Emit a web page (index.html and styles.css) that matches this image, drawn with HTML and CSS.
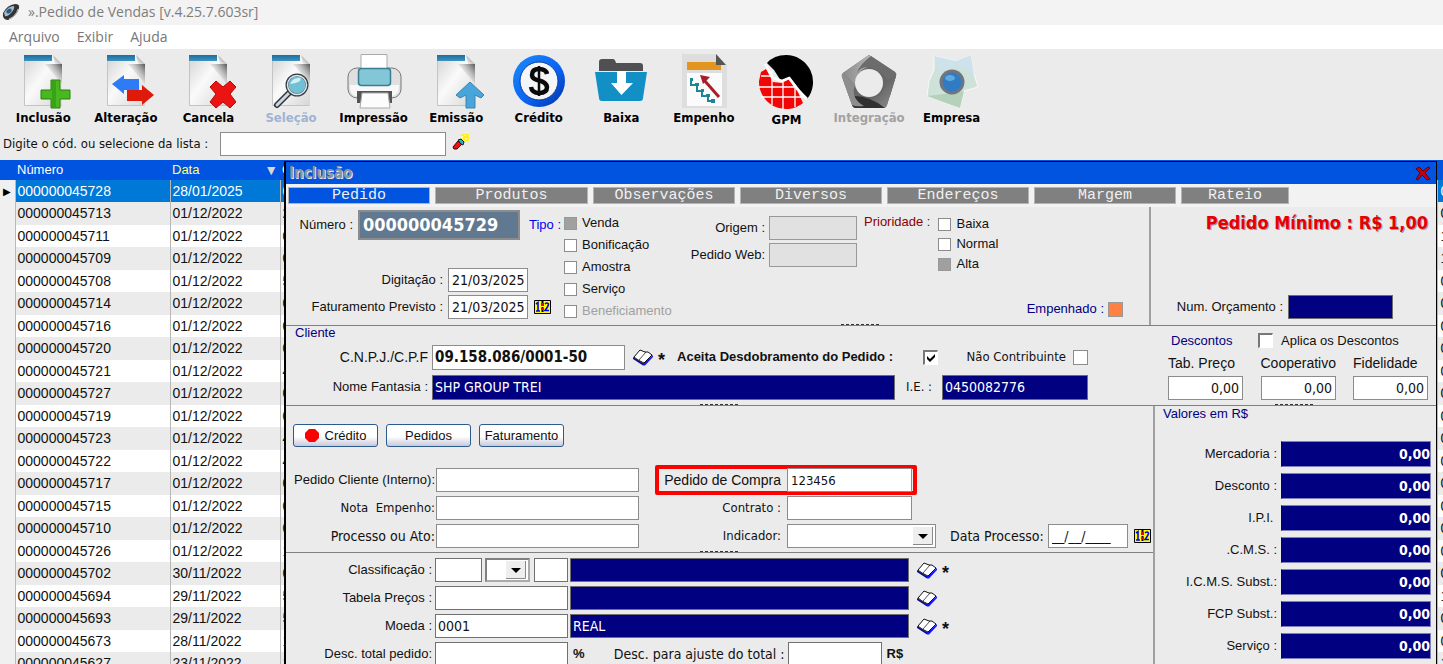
FILE: index.html
```html
<!DOCTYPE html>
<html lang="pt-BR">
<head>
<meta charset="utf-8">
<title>Pedido de Vendas</title>
<link rel="stylesheet" href="styles.css">
</head>
<body>
<svg class="defs" aria-hidden="true">
  <defs>
    <linearGradient id="paper" x1="0" y1="0" x2="1" y2="1"><stop offset="0" stop-color="#d2d2d2"/><stop offset=".45" stop-color="#fafafa"/><stop offset="1" stop-color="#d6d6d6"/></linearGradient>
    <linearGradient id="band" x1="0" y1="0" x2="0" y2="1"><stop offset="0" stop-color="#1b6ea0"/><stop offset="1" stop-color="#3d93bd"/></linearGradient>
    <linearGradient id="fold" x1="0" y1="1" x2="1" y2="0"><stop offset="0" stop-color="#fff"/><stop offset="1" stop-color="#777"/></linearGradient>
    <linearGradient id="shade" x1="0" y1="1" x2="1" y2="0"><stop offset=".4" stop-color="#888" stop-opacity="0"/><stop offset="1" stop-color="#444" stop-opacity=".9"/></linearGradient>
    <linearGradient id="ring" x1="0" y1="0" x2="1" y2="1"><stop offset="0" stop-color="#1a8cff"/><stop offset=".6" stop-color="#0a60f0"/><stop offset="1" stop-color="#0030a0"/></linearGradient>
    <linearGradient id="gl" x1="0" y1="0" x2="1" y2="0"><stop offset="0" stop-color="#8a8a8a"/><stop offset="1" stop-color="#c8c8c8"/></linearGradient>
    <linearGradient id="gd" x1="0" y1="0" x2="1" y2="1"><stop offset="0" stop-color="#444"/><stop offset="1" stop-color="#909090"/></linearGradient>
    <symbol id="doc" viewBox="0 0 56 56">
      <path d="M9 1h29l9 9v42H9z" fill="url(#paper)"/>
      <path d="M30 10h17v20z" fill="url(#shade)"/>
      <path d="M9 1h28v6H9z" fill="url(#band)"/>
      <path d="M38 1l9 9h-7z" fill="url(#fold)"/>
      <path d="M9.500 7v44.500h37" fill="none" stroke="#c4c4c4"/>
    </symbol>
    <symbol id="book" viewBox="0 0 20 17">
      <path d="M0 8v2l10 6.500h2L20 8V6l-8 7-2 1z" fill="#1414ff"/>
      <path d="M1 8L7 1l5 2h3l4 3-8 8-4-2-2-1z" fill="#fff"/>
      <path d="M1 8L7 1l5 2h3l4 3-8 8-4-2-2-1z" fill="none" stroke="#111"/>
      <path d="M13 3L6 11" stroke="#222" fill="none" stroke-width=".8"/>
      <path d="M0 9l10 6.500" stroke="#111" fill="none" stroke-width=".8"/>
    </symbol>
    <symbol id="cal" viewBox="0 0 17 14">
      <path d="M.5.5h16v13H.5z" fill="#ff0" stroke="#000"/>
      <path d="M2 4l2-1.500V11M2 11h4M11 4q2-2 3.500 0 0 2-3.500 6.500h4" fill="none" stroke="#00f" stroke-width="1.600"/>
      <path d="M8.500 1v12" stroke="#000" stroke-width="2" stroke-dasharray="2 1"/>
      <path d="M7 3h3v3H7zM7 8h3v2H7z" fill="#e00"/>
    </symbol>
  </defs>
</svg>

<header class="titlebar">
  <svg class="app-icon" viewBox="0 0 18 18"><path d="M1 10Q5 2 13 1q5 0 4 4-2 8-11 12Q0 17 1 10z" fill="#333"/><path d="M2 10Q6 3 12 3q1 3-3 7-4 4-6 3z" fill="#a9b9c8"/><ellipse cx="7" cy="8" rx="3" ry="2" fill="#1f5f8f" transform="rotate(-35 7 8)"/><path d="M16 6q-2 7-9 10" stroke="#bbb" fill="none"/></svg>
  <h1>».Pedido de Vendas [v.4.25.7.603sr]</h1>
</header>
<nav class="menubar">
  <a href="#">Arquivo</a><a href="#">Exibir</a><a href="#">Ajuda</a>
</nav>

<div class="toolbar">
  <button type="button"><svg viewBox="0 0 56 56"><use href="#doc"/><path d="M36 26h9v10h10v9H45v9h-9v-9H26v-9h10z" fill="#49b81f" stroke="#2c7f10"/><path d="M37 27h4v26h-4z" fill="#278e0c" opacity=".5"/></svg>Inclusão</button>
  <button type="button"><svg viewBox="0 0 56 56"><use href="#doc"/><path d="M14 30l12-9v4h15v11H26v4z" fill="#2d7cf5"/><path d="M56 41L44 31v5H29v11h15v4z" fill="#e01a0b"/></svg>Alteração</button>
  <button type="button"><svg viewBox="0 0 56 56"><use href="#doc"/><path d="M30 33l6-6 7 6 7-6 6 6-6 7 6 8-6 6-7-6-7 6-6-6 6-8z" fill="#ec1313" stroke="#b40a0a"/></svg>Cancela</button>
  <button type="button" class="off"><svg viewBox="0 0 56 56"><use href="#doc"/><path d="M27 38L14 51" stroke="#2b3440" stroke-width="6" stroke-linecap="round"/><path d="M26 39L14 51" stroke="#cfd6de" stroke-width="3" stroke-linecap="round"/><circle cx="34" cy="31" r="10" fill="#70c0d6" stroke="#333d47" stroke-width="3"/><circle cx="34" cy="31" r="9.500" fill="none" stroke="#dfe6ea" stroke-width="1.500"/><path d="M27 30q3-7 10-6 3 4-10 6z" fill="#d2f1f7"/></svg>Seleção</button>
  <button type="button"><svg viewBox="0 0 56 56"><rect x="2" y="14" width="53" height="30" rx="9" fill="#e0e0e0" stroke="#777"/><path d="M15 .5h26V16H15z" fill="#fff" stroke="#aaa"/><path d="M4 31h49q0 11-7 11H10q-6 0-6-11z" fill="#f8f8f8"/><rect x="12.500" y="14.500" width="32" height="17" rx="3" fill="#83c6d6" stroke="#397d92" stroke-width="1.500"/><path d="M11 37h35v12h-5v-7H16v7h-5z" fill="#555"/><path d="M16 39h26l2 15H14z" fill="#fcfcfc" stroke="#aaa"/></svg>Impressão</button>
  <button type="button"><svg viewBox="0 0 56 56"><use href="#doc"/><path d="M42 28l14 13-3 3-6-3v13h-9V41l-6 3-4-3z" fill="#48a5da" stroke="#3d83ab"/></svg>Emissão</button>
  <button type="button"><svg viewBox="0 0 56 56"><circle cx="28" cy="27" r="26" fill="url(#ring)"/><circle cx="28" cy="27" r="19" fill="#f4f5f8" stroke="#0a3d9c"/><path d="M36 20q-1-5-8-5-7 0-7 6 0 4 7 5.500t8 6.500q0 6-8 6-7 0-8-6" fill="none" stroke="#0a0a0a" stroke-width="4.500"/><path d="M28 12v30" stroke="#0a0a0a" stroke-width="2.500"/></svg>Crédito</button>
  <button type="button"><svg viewBox="0 0 56 56"><path d="M6 17V8q0-3 3-3h11q2 0 3 4h24q3 0 3 3v5z" fill="#505054"/><path d="M2 18h52l-4 26q0 3-3 3H9q-3 0-3-3z" fill="#1290c6"/><path d="M24 17h9v12h7L28.500 41 18 29h6z" fill="#fff"/></svg>Baixa</button>
  <button type="button"><svg viewBox="0 0 56 56"><path d="M6 0h34l11 11v43H6z" fill="#dedede"/><path d="M11 19h35v33H11z" fill="#fbfbfb"/><path d="M11 8h34v8H11z" fill="#e4951f"/><path d="M40 0l10 11H40z" fill="#555"/><path d="M15 26v5h6v6h5v5h6v5h6" fill="none" stroke="#1e8597" stroke-width="2"/><path d="M14 24h3v3h-3zM19 29h4v3h-4zM25 35h3v3h-3zM30 40h4v3h-4zM35 45h4v4h-4z" fill="#1e8597"/><path d="M43 43L28 26" stroke="#a81d2a" stroke-width="3"/><path d="M24 21l10 2-7 7z" fill="#a81d2a"/></svg>Empenho</button>
  <button type="button" class="low"><svg viewBox="0 0 56 56"><path d="M9 9Q16 1 28 1a27 27 0 0 1 21 44L39 32l-7-9-9 4-7-11z" fill="#000"/><path d="M3 18l5-3 7 13 9 1 7-4 8 11 6 13A27 27 0 0 1 1 27z" fill="#f20505"/><path d="M3 22h11M1 33h38M3 43h44M14 16v35M25 28v27M37 34v19" stroke="#fff" stroke-width="1.300"/><path d="M7 10l8 14 9 3 7-3 8 11 10 10" fill="none" stroke="#fff" stroke-width="2.500"/></svg>GPM</button>
  <button type="button" class="off gray"><svg viewBox="0 0 56 56"><path d="M28 1l26 17q2 2 1 4L46 51q-1 3-4 3H15q-3 0-4-3L1 23q-1-2 1-4z" fill="#666"/><path d="M26 2q2-1 4 0l12 9Q15 10 14 31L2 19z" fill="url(#gl)"/><path d="M30 2l24 16q2 2 1 4l-6 20q2-23-21-29-8-1-12 6 3-9 14-17z" fill="#6c6c6c"/><path d="M55 22l-9 29q-1 3-4 3-4-8-20-10 17 3 22-12 3-8 11-10z" fill="url(#gd)"/><path d="M44 54H15q-3 0-4-3l3-9q14 0 30 12z" fill="#303030"/><path d="M2 19q-2 2-1 4l10 28q3 2 12 1-14-8-9-21z" fill="#8d8d8d"/><circle cx="28" cy="29" r="14" fill="#ebebeb"/></svg>Integração</button>
  <button type="button"><svg viewBox="0 0 56 56"><path d="M10 2l22 5 15-6 3 19 4 13-14 4-4 17-17-6-16-6 2-15 5-11z" fill="#cfe2da" stroke="#f8faf8"/><path d="M10 2l22 5 15-6 3 19-17-8-18 6z" fill="#cde2ea"/><path d="M3 42l16 6 17 6 4-17-20 3z" fill="#b5d0bb"/><circle cx="28" cy="28" r="12.500" fill="#70747f"/><circle cx="28" cy="28" r="9.500" fill="#2f7cc4"/><ellipse cx="26" cy="24" rx="5" ry="3" fill="#60a8e0"/></svg>Empresa</button>
</div>

<div class="search">
  <label for="q">Digite o cód. ou selecione da lista :</label>
  <input id="q" type="text">
  <svg class="torch" viewBox="0 0 18 16"><path d="M8 1l3-1h6v7l-5 1z" fill="#ffef28"/><path d="M9 2h2v2H9zM13 4h2v2h-2zM12 1h2v1h-2z" fill="#fff9a0"/><path d="M1 13l5-6 4 3-5 5H2z" fill="#e11" stroke="#300"/><path d="M6 6l3-1 3 3-1 3-2-1z" fill="#20b8b0" stroke="#023"/></svg>
</div>

<main class="workspace">
  <table class="orders">
    <colgroup><col class="c-mark"><col class="c-num"><col class="c-date"><col><col class="c-last"></colgroup>
    <thead><tr><th></th><th>Número</th><th class="sorted">Data<span>▼</span></th><th>C</th><th></th></tr></thead>
    <tbody>
      <tr class="current"><td>▶</td><td>000000045728</td><td>28/01/2025</td><td>0</td><td>0</td></tr>
      <tr><td></td><td>000000045713</td><td>01/12/2022</td><td>2</td><td>0</td></tr>
      <tr><td></td><td>000000045711</td><td>01/12/2022</td><td>0</td><td>1</td></tr>
      <tr><td></td><td>000000045709</td><td>01/12/2022</td><td>0</td><td>1</td></tr>
      <tr><td></td><td>000000045708</td><td>01/12/2022</td><td>5</td><td>0</td></tr>
      <tr><td></td><td>000000045714</td><td>01/12/2022</td><td>0</td><td>0</td></tr>
      <tr><td></td><td>000000045716</td><td>01/12/2022</td><td>0</td><td>0</td></tr>
      <tr><td></td><td>000000045720</td><td>01/12/2022</td><td>0</td><td>0</td></tr>
      <tr><td></td><td>000000045721</td><td>01/12/2022</td><td>4</td><td>0</td></tr>
      <tr><td></td><td>000000045727</td><td>01/12/2022</td><td>0</td><td>0</td></tr>
      <tr><td></td><td>000000045719</td><td>01/12/2022</td><td>0</td><td>0</td></tr>
      <tr><td></td><td>000000045723</td><td>01/12/2022</td><td>4</td><td>0</td></tr>
      <tr><td></td><td>000000045722</td><td>01/12/2022</td><td>4</td><td>0</td></tr>
      <tr><td></td><td>000000045717</td><td>01/12/2022</td><td>0</td><td>0</td></tr>
      <tr><td></td><td>000000045715</td><td>01/12/2022</td><td>0</td><td>0</td></tr>
      <tr><td></td><td>000000045710</td><td>01/12/2022</td><td>0</td><td>0</td></tr>
      <tr><td></td><td>000000045726</td><td>01/12/2022</td><td>1</td><td>0</td></tr>
      <tr><td></td><td>000000045702</td><td>30/11/2022</td><td>0</td><td>0</td></tr>
      <tr><td></td><td>000000045694</td><td>29/11/2022</td><td>5</td><td>1</td></tr>
      <tr><td></td><td>000000045693</td><td>29/11/2022</td><td>5</td><td>0</td></tr>
      <tr><td></td><td>000000045673</td><td>28/11/2022</td><td>1</td><td>0</td></tr>
      <tr><td></td><td>000000045627</td><td>23/11/2022</td><td>1</td><td>1</td></tr>
    </tbody>
  </table>

  <section class="dialog">
    <div class="dialog-title"><h2>Inclusão</h2>
      <button type="button" aria-label="Fechar"><svg viewBox="0 0 16 15"><path d="M1 3l3-2 4 4 5-4 2 1-5 5 5 6-3 1-5-5-4 5-2-1 4-6z" fill="#c00010" stroke="#600010"/></svg></button>
    </div>
    <div class="tabs">
      <button type="button" class="active">Pedido</button><button type="button" class="wide">Produtos</button><button type="button">Observações</button><button type="button">Diversos</button><button type="button">Endereços</button><button type="button">Margem</button><button type="button" class="short">Rateio</button>
    </div>

    <div class="order-head">
      <div class="ident">
        <div class="row first"><label for="num">Número :</label><input id="num" class="number" value="000000045729"><span class="blue">Tipo :</span></div>
        <div class="row"><label for="dig">Digitação :</label><input id="dig" class="date" value="21/03/2025"></div>
        <div class="row"><label for="fat">Faturamento Previsto :</label><input id="fat" class="date" value="21/03/2025"><svg class="cal"><use href="#cal"/></svg></div>
      </div>
      <div class="checks types">
        <label><input type="checkbox" class="filled">Venda</label>
        <label><input type="checkbox">Bonificação</label>
        <label><input type="checkbox">Amostra</label>
        <label><input type="checkbox">Serviço</label>
        <label class="dim"><input type="checkbox" disabled>Beneficiamento</label>
      </div>
      <div class="origin">
        <label for="ori">Origem :</label><input id="ori" disabled>
        <label for="web">Pedido Web:</label><input id="web" disabled>
      </div>
      <div class="priority">
        <div class="prio-top"><span class="maroon">Prioridade :</span>
          <div class="checks">
            <label><input type="checkbox">Baixa</label>
            <label><input type="checkbox">Normal</label>
            <label><input type="checkbox" class="filled">Alta</label>
          </div>
        </div>
        <div class="reserved">Empenhado :<i></i></div>
      </div>
      <div class="budget">
        <strong>Pedido Mínimo : R$ 1,00</strong>
        <div class="row"><label for="orc">Num. Orçamento :</label><input id="orc" class="navy"></div>
      </div>
    </div>

    <div class="client">
      <div class="client-main">
        <h3>Cliente</h3>
        <div class="row">
          <label class="lbl large" for="cnpj">C.N.P.J./C.P.F</label><input id="cnpj" class="cnpj" value="09.158.086/0001-50">
          <svg class="book"><use href="#book"/></svg><b class="star">*</b>
          <label class="accept" for="desd">Aceita Desdobramento do Pedido :</label><input id="desd" type="checkbox" class="sunken" checked>
          <label class="tah nocontrib" for="nc">Não Contribuinte</label><input id="nc" type="checkbox" class="big">
        </div>
        <div class="row">
          <label class="lbl" for="nome">Nome Fantasia :</label><input id="nome" class="navy name" value="SHP GROUP TREI">
          <label class="tah" for="ie">I.E. :</label><input id="ie" class="navy ie" value="0450082776">
        </div>
      </div>
      <div class="discounts">
        <div class="disc-head"><h3>Descontos</h3><label><input type="checkbox" class="sunken">Aplica os Descontos</label></div>
        <div class="disc-grid">
          <label>Tab. Preço<input value="0,00"></label>
          <label>Cooperativo<input value="0,00"></label>
          <label>Fidelidade<input value="0,00"></label>
        </div>
      </div>
    </div>

    <div class="lower">
      <div class="lower-main">
        <div class="purchase">
          <div class="actions"><button type="button"><svg viewBox="0 0 14 13"><path d="M4 0h6l4 4v5l-4 4H4L0 9V4z" fill="#f00"/></svg>Crédito</button><button type="button">Pedidos</button><button type="button">Faturamento</button></div>
          <div class="row"><label class="lbl" for="pci">Pedido Cliente (Interno):</label><input id="pci" class="f-long">
            <div class="highlight"><label class="lbl2 large" for="pc">Pedido de Compra</label><input id="pc" class="f-mid" value="123456"></div></div>
          <div class="row"><label class="lbl tah" for="ne">Nota&nbsp; Empenho:</label><input id="ne" class="f-long"><label class="lbl2 tah" for="ct">Contrato :</label><input id="ct" class="f-mid"></div>
          <div class="row"><label class="lbl tah large" for="pa">Processo ou Ato:</label><input id="pa" class="f-long"><label class="lbl2 tah" for="ind">Indicador:</label><select id="ind" class="combo"><option></option></select>
            <label class="tah large proc" for="dp">Data Processo:</label><input id="dp" class="date" value="__/__/____"><svg class="cal"><use href="#cal"/></svg></div>
        </div>
        <div class="terms">
          <div class="row"><label class="lbl" for="cl">Classificação :</label><input id="cl" class="f-a"><select aria-label="Classe" class="combo mini"><option></option></select><input aria-label="Subclasse" class="f-b"><input aria-label="Descrição da classificação" class="navy desc"><svg class="book"><use href="#book"/></svg><b class="star">*</b></div>
          <div class="row"><label class="lbl" for="tp">Tabela Preços :</label><input id="tp" class="f-code"><input aria-label="Descrição da tabela" class="navy desc"><svg class="book"><use href="#book"/></svg></div>
          <div class="row"><label class="lbl" for="mo">Moeda :</label><input id="mo" class="f-code" value="0001"><input aria-label="Descrição da moeda" class="navy desc" value="REAL"><svg class="book"><use href="#book"/></svg><b class="star">*</b></div>
          <div class="row"><label class="lbl" for="dt">Desc. total pedido:</label><input id="dt" class="f-code"><b class="unit">%</b><label class="tah large adjust" for="da">Desc. para ajuste do total :</label><input id="da" class="f-adj"><b class="unit">R$</b></div>
        </div>
      </div>
      <div class="totals">
        <h3>Valores em R$</h3>
        <div class="totals-grid">
          <label for="v1">Mercadoria :</label><input id="v1" value="0,00">
          <label for="v2">Desconto :</label><input id="v2" value="0,00">
          <label for="v3">I.P.I.&nbsp;</label><input id="v3" value="0,00">
          <label for="v4">.C.M.S. :</label><input id="v4" value="0,00">
          <label for="v5">I.C.M.S. Subst.:</label><input id="v5" value="0,00">
          <label for="v6">FCP Subst.:</label><input id="v6" value="0,00">
          <label for="v7">Serviço :</label><input id="v7" value="0,00">
        </div>
      </div>
    </div>
  </section>
</main>
</body>
</html>
```
FILE: styles.css
```css
:root {
  --tahoma: "DejaVu Sans Condensed", "DejaVu Sans", sans-serif;
  --arial: "Liberation Sans", Arial, sans-serif;
  --blue: #0054e0;
  --navy: #000080;
  --face: #ebebeb;
}
* { box-sizing: border-box; }
body {
  margin: 0;
  height: 100vh;
  display: flex;
  flex-direction: column;
  overflow: hidden;
  background: var(--face);
  font: 13px/16px var(--arial);
  color: #111;
}
h1, h2, h3 { margin: 0; font-weight: normal; }
button, input, select { font: inherit; color: inherit; margin: 0; border-radius: 0; }
svg { display: block; flex: none; }
.defs { position: absolute; width: 0; height: 0; }

/* window chrome */
.titlebar { display: flex; align-items: center; gap: 8px; height: 25px; padding: 0 2px 2px; background: #f3f3f3; color: #7d7d7d; flex: none; }
.app-icon { width: 18px; height: 18px; }
.titlebar h1 { font: 14px/20px "Open Sans", sans-serif; }
.menubar { display: flex; align-items: center; gap: 17px; height: 24px; padding: 0 9px; background: #fff; flex: none; }
.menubar a { font: 14px/20px "Open Sans", sans-serif; color: #777; text-decoration: none; }
.toolbar { display: flex; width: 100%; max-width: 993px; height: 82px; padding: 5px 0 0 2px; flex: none; }
.toolbar button { flex: 1 1 0; min-width: 0; display: flex; flex-direction: column; align-items: center; padding: 0; border: 0; background: none; font: bold 13px/16px var(--tahoma); color: #000; white-space: nowrap; }
.toolbar svg { width: 56px; height: 56px; }
.toolbar .low { line-height: 20px; }
.toolbar .off { color: #9fb4d2; }
.toolbar .gray { color: #a2a2a2; }
.search { display: flex; align-items: flex-start; height: 29px; padding: 1px 3px; flex: none; }
.search label { flex: none; width: 217px; font: 13px/24px var(--tahoma); white-space: nowrap; }
.search input { width: 226px; height: 24px; border: 1px solid #8c8c8c; background: #fff; }
.torch { width: 18px; height: 16px; margin: 2px 0 0 6px; }

/* list behind the form */
.workspace { position: relative; flex: 1; min-height: 0; overflow: hidden; }
.orders { width: 100%; border-collapse: collapse; table-layout: fixed; background: #fff; }
.c-mark { width: 15px; }
.c-num { width: 155px; }
.c-date { width: 110px; }
.c-last { width: 6px; }
.orders th { height: 20px; padding: 0 2px; background: var(--blue); color: #fff; font: 13px/20px var(--arial); text-align: left; overflow: hidden; }
.orders .sorted { color: #ffff80; }
.sorted span { float: right; font-size: 14px; color: #d8d8d8; }
.orders td { height: 22px; padding: 0 2px; font-size: 14px; line-height: 21px; border-right: 1px solid #b8b8b8; overflow: hidden; white-space: nowrap; }
.orders tr:nth-child(even) td { height: 23px; }
.orders tr td:first-child { background: #f0f0f0; font-size: 10px; padding: 0 3px; color: #000; }
.orders tbody tr:nth-child(odd) td:not(:first-child) { background: #fff; }
.orders tbody tr:nth-child(even) td:not(:first-child) { background: #ebebeb; }
.orders tbody tr.current td:not(:first-child) { background: #0078d7; color: #fff; }
.orders td:last-child { padding: 0 0 0 3px; border: 0; }

/* form window */
.dialog { position: absolute; left: 284px; right: 6px; top: 1px; bottom: 0; overflow: hidden; display: flex; flex-direction: column; border: solid #000; border-width: 1px 1px 0 2px; background: var(--face); }
.dialog-title { display: flex; justify-content: space-between; align-items: center; height: 22px; padding: 0 5px 0 3px; background: var(--blue); flex: none; }
.dialog-title h2 { font: bold 15px/22px var(--tahoma); color: #8b93a0; text-shadow: 1px 1px #e4e4e4; }
.dialog-title button { padding: 0; border: 0; background: none; }
.dialog-title svg { width: 16px; height: 15px; }
.tabs { display: flex; gap: 5px; height: 23px; padding: 3px 2px; background: #f2f2f2; flex: none; }
.tabs button { flex: 0 1 142px; height: 17px; padding: 0; border: 1px solid #b4b4b4; background: #808080; color: #f0f0f0; font: 15px/15px "Liberation Mono", monospace; }
.tabs .active { background: var(--blue); }
.tabs .wide { flex-basis: 153px; }
.tabs .short { flex-basis: 108px; }

.row { display: flex; align-items: center; }
.row label, .row span { white-space: nowrap; }
.dialog input:not([type="checkbox"]), .combo { border: 1px solid #8c8c8c; background: #fff; height: 24px; padding: 0 3px; font: 13px/20px var(--tahoma); min-width: 0; }
.dialog input.navy { background: var(--navy); border-color: #6e6e6e; color: #fff; padding: 0 2px; font-size: 14px; }
.dialog input.date { width: 80px; font-size: 14px; }
.blue { color: #0000f0; }
.maroon { color: #8b0000; }
h3 { color: var(--navy); font-size: 13px; line-height: 16px; }
.tah { font: 13px/16px var(--tahoma); }
.large { font-size: 14px; }
.cal { width: 17px; height: 14px; margin-left: 6px; }
.book { width: 20px; height: 17px; margin-left: 8px; }
.star { font: bold 18px/20px var(--arial); margin-left: 5px; height: 14px; }

input[type="checkbox"] { appearance: none; width: 13px; height: 13px; border: 1px solid #8c8c8c; background: #fff; flex: none; }
input.filled { background: #a0a0a0; border-color: #999; }
input.big { width: 15px; height: 15px; }
input.sunken { width: 15px; height: 15px; border: solid; border-width: 2px 1px 1px 2px; border-color: #777 #fff #fff #777; background: #fff; }
input.sunken:checked { background: #fff url("data:image/svg+xml,%3Csvg xmlns='http://www.w3.org/2000/svg' viewBox='0 0 12 12'%3E%3Cpath d='M2 4v3l3 3 5-5V2L5 7z'/%3E%3C/svg%3E") center / 12px no-repeat; }

.order-head { display: flex; height: 119px; border-bottom: 1px solid #808080; flex: none; background: repeating-linear-gradient(90deg, #333 0 3px, transparent 3px 5px) 555px 100% / 38px 1px no-repeat; }
.ident { width: 278px; padding-top: 3px; flex: none; }
.ident .row { height: 24px; margin-bottom: 3px; }
.ident .row label { width: 157px; margin-right: 5px; text-align: right; }
.ident .row.first { height: 29px; margin-bottom: 29px; }
.ident .row.first label { width: 67px; }
.dialog input.number { width: 162px; height: 30px; border: 2px solid #8c8c8c; background: #607890; color: #fff; font: bold 18px/26px var(--tahoma); }
.ident .first span { margin-left: 9px; }
.checks { display: grid; }
.checks label { display: flex; align-items: center; gap: 5px; white-space: nowrap; }
.types { width: 118px; grid-auto-rows: 22px; padding-top: 5px; flex: none; }
.dim { color: #a0a0a0; }
.origin { width: 175px; display: grid; grid-template-columns: 83px 88px; grid-auto-rows: 24px; gap: 3px 4px; padding-top: 9px; align-content: start; align-items: center; text-align: right; flex: none; }
.dialog .origin input { width: 88px; background: #e1e1e1; border: 1px solid #999; }
.priority { flex: 1; display: flex; flex-direction: column; justify-content: space-between; padding: 7px 26px 8px 7px; }
.prio-top { display: flex; gap: 8px; white-space: nowrap; }
.priority .checks { grid-auto-rows: 20px; }
.reserved { display: flex; align-items: center; justify-content: flex-end; gap: 4px; color: var(--navy); }
.reserved i { width: 15px; height: 15px; background: #ff8040; border: 1px solid #999; }
.budget { width: 287px; border-left: 2px solid #a0a0a0; display: flex; flex-direction: column; justify-content: space-between; padding: 4px 8px 6px 0; flex: none; }
.budget strong { font: bold 18px/24px var(--tahoma); color: #e80000; text-align: right; text-shadow: 1px 1px #9a9ab0; white-space: nowrap; }
.budget .row { justify-content: flex-end; padding-right: 35px; gap: 5px; }
.budget .row input { width: 105px; }

.client { display: flex; justify-content: space-between; height: 80px; border-bottom: 1px solid #808080; flex: none; background: repeating-linear-gradient(90deg, #333 0 3px, transparent 3px 5px) 414px 100% / 38px 1px no-repeat, repeating-linear-gradient(90deg, #333 0 3px, transparent 3px 5px) 989px 100% / 38px 1px no-repeat; }
.client-main { width: 802px; }
.client-main h3 { padding-left: 9px; height: 18px; line-height: 14px; }
.client-main .row { height: 26px; margin-bottom: 4px; }
.client-main .lbl { width: 142px; margin-right: 4px; text-align: right; }
.dialog input.cnpj { width: 193px; height: 25px; font-weight: bold; font-size: 15px; padding: 0 2px; }
.accept { font-weight: bold; margin-left: 12px; width: 246px; }
.nocontrib { margin: 0 7px 0 auto; }
.dialog input.name { flex: 1; height: 25px; margin-right: 11px; }
.dialog input.ie { width: 146px; height: 25px; margin-left: 10px; }
.discounts { width: 260px; margin-right: 8px; padding-top: 7px; }
.disc-head { display: flex; padding-left: 3px; }
.disc-head label { display: flex; gap: 8px; margin-left: auto; width: 173px; padding-left: 3px; white-space: nowrap; }
.disc-grid { display: grid; grid-template-columns: repeat(3, 75px); justify-content: space-between; margin-top: 6px; font-size: 14px; }
.disc-grid label { display: grid; gap: 5px; }
.dialog .disc-grid input { text-align: right; width: 100%; font-size: 14px; }

.lower { flex: 1; display: flex; min-height: 0; }
.lower-main { flex: 1; min-width: 0; }
.purchase { height: 147px; padding-top: 18px; border-bottom: 1px solid #808080; background: repeating-linear-gradient(90deg, #333 0 3px, transparent 3px 5px) 414px 100% / 38px 1px no-repeat; }
.actions { display: flex; gap: 8px; padding-left: 7px; margin-bottom: 21px; }
.actions button { width: 85px; height: 23px; padding: 0; display: flex; align-items: center; justify-content: center; gap: 6px; border: 1px solid #2c5c8e; border-radius: 3px; background: linear-gradient(#fff 0 55%, #c8c8dc); white-space: nowrap; }
.actions svg { width: 14px; height: 13px; }
.purchase .row, .terms .row { height: 24px; margin-bottom: 4px; }
.purchase .lbl { width: 149px; margin-right: 1px; text-align: right; }
.f-long { width: 203px; }
.f-mid { width: 125px; }
.lbl2 { width: 142px; margin-right: 6px; text-align: right; }
.highlight { display: flex; align-items: center; height: 30px; margin-left: 16px; border: 4px solid #f00; border-radius: 2px; }
.highlight .lbl2 { width: 122px; }
.highlight .f-mid { margin-right: 1px; }
.combo { width: 149px; appearance: none; }
.dialog .combo { background: url("data:image/svg+xml,%3Csvg xmlns='http://www.w3.org/2000/svg' viewBox='0 0 20 20'%3E%3Cpath d='M0 1h19v18H0z' fill='%23eee'/%3E%3Cpath d='M0 18.500h19.500V1' fill='none' stroke='%23888'/%3E%3Cpath d='M5 8h10l-5 5z'/%3E%3C/svg%3E") right 2px center / 20px 20px no-repeat #fff; }
.proc { margin: 0 4px 0 14px; }
.terms { padding-top: 5px; }
.terms .lbl { width: 146px; margin-right: 3px; text-align: right; }
.dialog .terms input { border-color: #707070; font-size: 14px; padding: 0 2px; }
.f-a { width: 47px; }
.f-b { width: 34px; }
.dialog .mini { width: 45px; margin: 0 4px 0 3px; border: 2px solid; border-color: #808080 #aaa #aaa #808080; }
.f-code { width: 133px; }
.desc { flex: 0 1 339px; margin-left: 2px; }
.unit { margin-left: 5px; }
.adjust { width: 200px; margin-right: 3px; text-align: right; }
.f-adj { width: 94px; }

.totals { width: 283px; border-left: 2px solid #a0a0a0; flex: none; }
.totals h3 { padding-left: 8px; height: 35px; }
.totals-grid { display: grid; grid-template-columns: 1fr 150px; grid-auto-rows: 26px; gap: 6px 4px; align-items: center; text-align: right; padding-right: 5px; }
.dialog .totals-grid input { width: 150px; height: 26px; padding: 0; border: 1px solid #7f7fc0; border-left-color: var(--navy); background: var(--navy); color: #fff; font-weight: bold; font-size: 14px; text-align: right; }
```
